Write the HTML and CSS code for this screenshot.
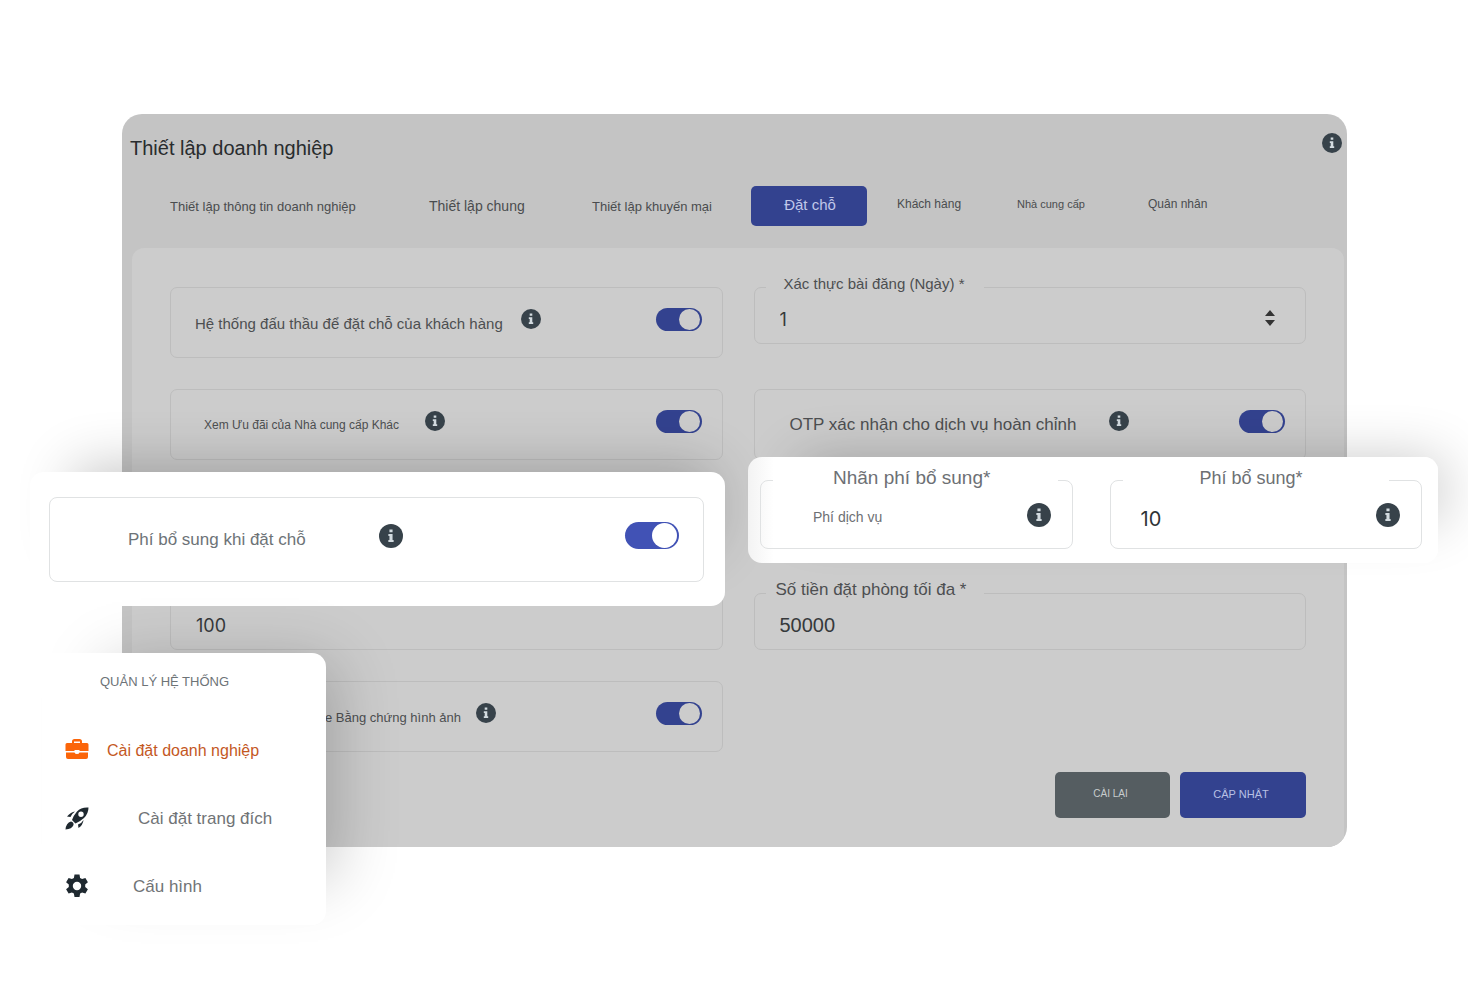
FILE: index.html
```html
<!DOCTYPE html>
<html lang="vi">
<head>
<meta charset="utf-8">
<meta name="viewport" content="width=device-width, initial-scale=1">
<title>Thiết lập doanh nghiệp</title>
<link rel="stylesheet" href="styles.css">
</head>
<body>
<svg class="defs" aria-hidden="true">
  <symbol id="info" viewBox="0 0 20 20">
    <circle cx="10" cy="10" r="10" fill="#37424a"/>
    <path class="info-mark" d="M8.700 4.500h2.600v2.300H8.700zM7.800 8.300h3.500v5h.9V15H7.800v-1.700h.9V10h-.9z"/>
  </symbol>
</svg>
<div class="stage">
  <main class="panel">
    <header class="panel-head">
      <h1 class="title">Thiết lập doanh nghiệp</h1>
      <svg class="info" role="img" aria-label="Thông tin"><use href="#info"/></svg>
    </header>
    <nav class="tabs">
      <a class="tab t13" href="#info-tab">Thiết lập thông tin doanh nghiệp</a>
      <a class="tab t14" href="#general">Thiết lập chung</a>
      <a class="tab t13" href="#promo">Thiết lập khuyến mại</a>
      <a class="tab tab-active" href="#booking">Đặt chỗ</a>
      <a class="tab tab-raised t12" href="#customers">Khách hàng</a>
      <a class="tab tab-raised t11" href="#providers">Nhà cung cấp</a>
      <a class="tab tab-raised t12" href="#staff">Quân nhân</a>
    </nav>
    <form class="content">
      <div class="grid">
        <div class="card card-bidding">
          <label class="card-label t15" for="bidding">Hệ thống đấu thầu để đặt chỗ của khách hàng</label>
          <svg class="info"><use href="#info"/></svg>
          <input class="toggle" id="bidding" type="checkbox" checked>
        </div>
        <div class="field">
          <label class="field-label field-label-days t15" for="days">Xác thực bài đăng (Ngày) *</label>
          <input class="field-input inter" id="days" type="number" value="1">
          <svg class="spinner" viewBox="0 0 10 16"><path d="M5 0l5 6H0zM0 10h10l-5 6z" fill="#333"/></svg>
        </div>
        <div class="card card-offers">
          <label class="card-label t12" for="offers">Xem Ưu đãi của Nhà cung cấp Khác</label>
          <svg class="info"><use href="#info"/></svg>
          <input class="toggle" id="offers" type="checkbox" checked>
        </div>
        <div class="card card-otp">
          <label class="card-label t17" for="otp">OTP xác nhận cho dịch vụ hoàn chỉnh</label>
          <svg class="info"><use href="#info"/></svg>
          <input class="toggle" id="otp" type="checkbox" checked>
        </div>
        <div class="field field-min">
          <input class="field-input inter" type="text" value="100" aria-label="100">
        </div>
        <div class="field field-max">
          <label class="field-label field-label-max t17" for="max">Số tiền đặt phòng tối đa *</label>
          <input class="field-input" id="max" type="text" value="50000">
        </div>
        <div class="card card-proof">
          <label class="card-label t13" for="proof">e Bằng chứng hình ảnh</label>
          <svg class="info"><use href="#info"/></svg>
          <input class="toggle" id="proof" type="checkbox" checked>
        </div>
      </div>
      <div class="actions">
        <button class="btn btn-reset" type="reset">CÀI LẠI</button>
        <button class="btn btn-save" type="submit">CẬP NHẬT</button>
      </div>
    </form>
  </main>

  <section class="pop pop-toggle">
    <div class="pop-card">
      <label class="pop-label t17" for="extra">Phí bổ sung khi đặt chỗ</label>
      <svg class="info info-lg"><use href="#info"/></svg>
      <input class="toggle toggle-lg" id="extra" type="checkbox" checked>
    </div>
  </section>

  <section class="pop pop-fee">
    <div class="fee">
      <label class="fee-label fee-label-name" for="fee-name">Nhãn phí bổ sung*</label>
      <input class="fee-input fee-input-name" id="fee-name" type="text" value="Phí dịch vụ">
      <svg class="info info-lg"><use href="#info"/></svg>
    </div>
    <div class="fee">
      <label class="fee-label fee-label-value" for="fee-value">Phí bổ sung*</label>
      <input class="fee-input fee-input-value inter" id="fee-value" type="text" value="10">
      <svg class="info info-lg"><use href="#info"/></svg>
    </div>
  </section>

  <nav class="pop side">
    <h2 class="side-title">QUẢN LÝ HỆ THỐNG</h2>
    <a class="side-item side-active t16" href="#business">
      <svg class="side-icon" viewBox="0 0 24 24" fill="#fb6509"><path fill-rule="evenodd" d="M7 4V2.500Q7 0 9.500 0h5Q17 0 17 2.500V4h5q1.500 0 1.500 1.500V12h-9v-1h-5v1h-9V5.500Q.500 4 2 4zM9 4h6V2.500H9z"/><path d="M1 13.500h8.500q.5 1.500 2.500 1.500t2.500-1.500H23V18q0 2-2 2H3q-2 0-2-2z"/><circle cx="12" cy="12.500" r="1.500" fill="#fff"/></svg>
      <span>Cài đặt doanh nghiệp</span>
    </a>
    <a class="side-item side-landing t17" href="#landing">
      <svg class="side-icon" viewBox="0 1 24 24" fill="#1f2930"><path fill-rule="evenodd" d="M23.500 1.500Q16 1 12 5.500Q8.500 9.500 7 14l3.500 3.500Q15 15.500 19 12Q23.500 7.500 23.500 1.500zM16 5.500a2.700 2.700 0 1 1 0 5.400a2.700 2.700 0 1 1 0-5.400z"/><path d="M10 5.500Q6 6 2 10.500l3.500.5Q7 7.500 10 5.500zM18.500 14Q17 17 13 18.500l.5 3.500Q18 19 18.500 14zM6 15.500q3 .5 2.500 3.500Q7 23 .500 23.500Q1 17 6 15.500z"/></svg>
      <span>Cài đặt trang đích</span>
    </a>
    <a class="side-item side-config t17" href="#config">
      <svg class="side-icon" viewBox="0 1 24 24" fill="#1f2930"><path fill-rule="evenodd" d="M9.500.500h5l.6 3.400 2 1.200 3.300-1.200 2.500 4.300-2.700 2.300v2.500l2.700 2.300-2.500 4.300-3.300-1.200-2 1.200-.6 3.400h-5l-.6-3.400-2-1.200-3.300 1.200-2.500-4.300L3.800 13v-2.500L1.100 8.200l2.500-4.300 3.300 1.200 2-1.200zM12 7.800a4.200 4.200 0 1 0 0 8.400a4.200 4.200 0 1 0 0-8.400z"/></svg>
      <span>Cấu hình</span>
    </a>
  </nav>
</div>
</body>
</html>
```

FILE: styles.css
```css
* { box-sizing: border-box; }

body {
  margin: 0;
  background: #fff;
  font-family: "Liberation Sans", Arial, sans-serif;
  color: #4d4f51;
}

.defs { position: absolute; width: 0; height: 0; }

.stage {
  position: relative;
  min-height: 100vh;
  padding: 114px 121px 96px 122px;
  overflow: hidden;
}

.t11 { font-size: 11px; }
.t12 { font-size: 12px; }
.t13 { font-size: 13px; }
.t14 { font-size: 14px; }
.t15 { font-size: 15px; }
.t16 { font-size: 16px; }
.t17 { font-size: 17px; }
.inter { font-family: Inter, "Liberation Sans", sans-serif; font-size: 18px; }

.panel {
  border-radius: 20px;
  background: #c4c4c4;
  overflow: hidden;
}

.panel-head {
  display: flex;
  align-items: flex-start;
  justify-content: space-between;
  padding: 19px 5px 0 8px;
  height: 72px;
}

.title {
  margin: 0;
  font-size: 20px;
  line-height: 30px;
  font-weight: 400;
  color: #292c2e;
}

.info { display: block; flex: none; width: 20px; height: 20px; }
.info-lg { width: 24px; height: 24px; }
.info-mark { fill: #d3dbe0; }

.tabs {
  display: grid;
  grid-template-columns: 259fr 163fr 159fr 146fr 120fr 131fr 199fr;
  align-items: center;
  height: 62px;
  padding: 0 0 22px 48px;
}

.tab { color: #4a4c4e; text-decoration: none; white-space: nowrap; }
.tab-raised { padding-bottom: 5px; }

.tab-active {
  width: 116px;
  padding: 0 0 2px 2px;
  border-radius: 5px;
  background: #33428f;
  color: #c0c8ea;
  font-size: 15px;
  line-height: 38px;
  text-align: center;
}

.content {
  margin: 0 3px 0 10px;
  padding: 39px 38px 29px;
  border-radius: 12px 12px 0 0;
  background: #ccc;
}

.grid {
  display: grid;
  grid-template-columns: 1fr 1fr;
  grid-template-rows: 71px 71px 71px 57px 71px;
  gap: 31px;
  align-items: start;
}

.card {
  display: flex;
  align-items: center;
  height: 71px;
  padding: 0 20px 7px 24px;
  border: 1px solid #bdbdbd;
  border-radius: 7px;
}

.card-label { padding-top: 8px; white-space: nowrap; }
.card .toggle { margin-left: auto; }
.card-bidding { gap: 18px; }
.card-offers { gap: 26px; padding-left: 33px; }
.card-otp { gap: 33px; padding-left: 35px; }
.card-proof { grid-row: 5; gap: 15px; padding-left: 154px; }
.field-min, .field-max { grid-row: 4; }

.toggle {
  appearance: none;
  flex: none;
  display: flex;
  justify-content: flex-end;
  width: 46px;
  height: 23px;
  margin: 0;
  padding: 1px 2px;
  border-radius: 14px;
  background: #33428f;
}
.toggle::before {
  content: "";
  width: 21px;
  height: 21px;
  border-radius: 50%;
  background: #ccc;
}
.toggle-lg { width: 54px; height: 27px; background: #4152b5; }
.toggle-lg::before { width: 25px; height: 25px; background: #fff; }

.field {
  position: relative;
  display: flex;
  align-items: center;
  height: 57px;
  padding: 4px 30px 0 25px;
  border: 1px solid #bdbdbd;
  border-radius: 7px;
}

.field-label {
  position: absolute;
  top: -14px;
  left: 11px;
  line-height: 20px;
  background: #ccc;
  white-space: nowrap;
}
.field-label-days { padding: 0 20px 0 18px; }
.field-label-max { padding: 0 18px 0 10px; }

.field-input {
  flex: 1;
  min-width: 0;
  padding: 4px 0 0;
  border: 0;
  outline: 0;
  background: none;
  color: #36393b;
  appearance: textfield;
}
.field-input:not(.inter) { font-family: inherit; font-size: 20px; }
.field-input::-webkit-inner-spin-button { appearance: none; margin: 0; }

.spinner { flex: none; width: 10px; height: 16px; }

.actions {
  display: flex;
  justify-content: flex-end;
  gap: 10px;
  padding-top: 20px;
}

.btn {
  height: 46px;
  padding: 0 4px 3px 0;
  border: 0;
  border-radius: 5px;
  font-family: inherit;
}
.btn-reset { width: 115px; background: #555d61; color: #c8ccce; font-size: 10px; }
.btn-save { width: 126px; background: #33428f; color: #b8c0e4; font-size: 11px; }

.pop {
  position: absolute;
  border-radius: 14px;
  background: #fff;
}
.pop .info-mark { fill: #fff; }

.pop-toggle {
  top: 472px;
  left: 30px;
  right: calc(50% + 9px);
  padding: 25px 21px 24px 19px;
  box-shadow: 16px -32px 56px -28px rgba(0, 0, 0, 0.24);
}

.pop-card {
  display: flex;
  align-items: center;
  height: 85px;
  padding: 0 24px 8px 78px;
  border: 1px solid #e0e2e3;
  border-radius: 8px;
}
.pop-label { width: 251px; padding-top: 8px; color: #6d7377; }
.pop-card .toggle { margin-left: auto; }

.pop-fee {
  top: 457px;
  left: calc(50% + 14px);
  right: 30px;
  display: grid;
  grid-template-columns: minmax(0, 1fr) minmax(0, 1fr);
  gap: 37px;
  padding: 23px 16px 14px 12px;
  background: linear-gradient(90deg, #f3f3f3, #fff 26px);
  box-shadow: 28px -20px 56px -24px rgba(0, 0, 0, 0.24);
}

.fee {
  position: relative;
  display: flex;
  align-items: center;
  height: 69px;
  padding: 0 21px 0 30px;
  border: 1px solid #e0e2e3;
  border-radius: 8px;
}

.fee-label {
  position: absolute;
  top: -14px;
  left: 12px;
  right: 14px;
  line-height: 22px;
  background: #fff;
  color: #6d7074;
}
.fee-label-name { padding-left: 60px; font-size: 19px; }
.fee-label-value { right: 32px; padding-left: 77px; font-size: 18px; }

.fee-input {
  flex: 1;
  min-width: 0;
  padding: 4px 0 0;
  border: 0;
  outline: 0;
  background: none;
}
.fee-input-name { padding-left: 22px; font-family: inherit; font-size: 14px; color: #6d7074; }
.fee-input-value { padding-top: 8px; font-size: 20px; color: #2f3437; }

.side {
  top: 653px;
  left: 42px;
  width: 284px;
  padding: 19px 23px 4px;
  box-shadow: 36px -18px 60px -28px rgba(0, 0, 0, 0.22);
}

.side-title {
  margin: 0 0 25px;
  padding-left: 35px;
  font-size: 13px;
  line-height: 20px;
  font-weight: 400;
  color: #6d7377;
}

.side-item {
  display: flex;
  align-items: center;
  gap: 18px;
  height: 68px;
  color: #707376;
  text-decoration: none;
}
.side-active { color: #c4581f; }
.side-landing { gap: 49px; }
.side-config { gap: 44px; }
.side-icon { flex: none; width: 24px; height: 24px; overflow: visible; }
```
